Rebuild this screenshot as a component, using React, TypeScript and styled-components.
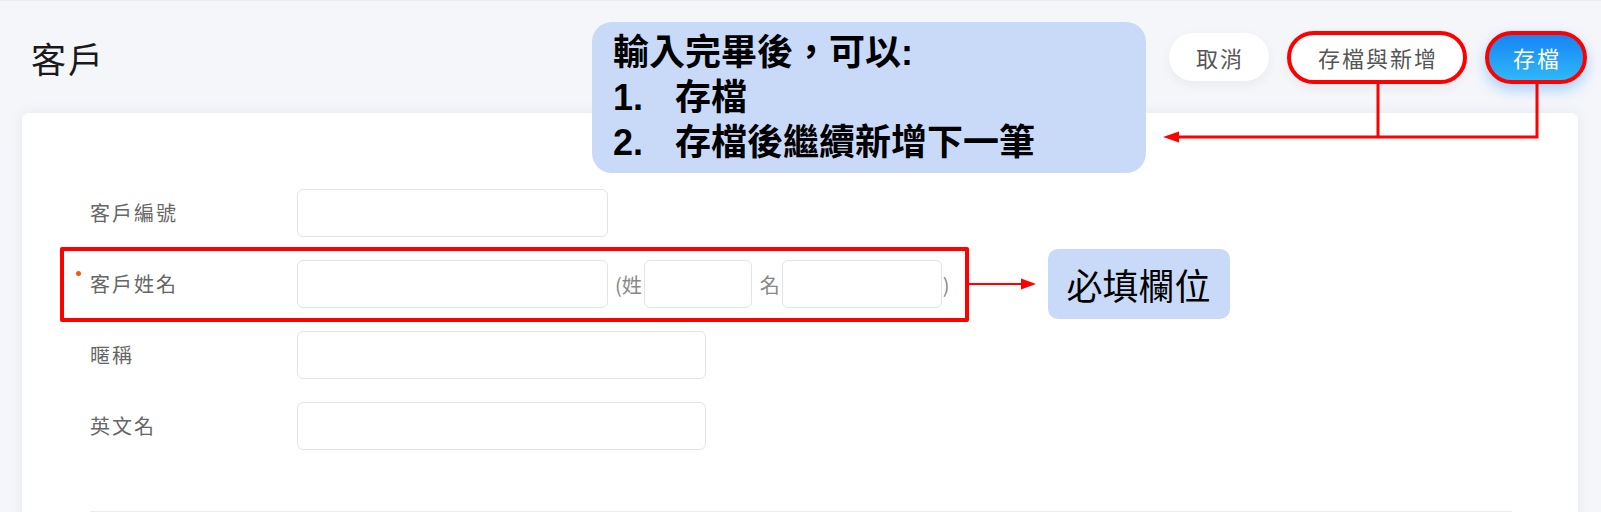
import React from "react"
import styled, { createGlobalStyle, css } from "styled-components"

const CJK = `"Noto Sans CJK TC", "Noto Sans CJK SC", sans-serif`
const RED = "#ff0000"
const NOTE_BG = "#c9daf8"
const PAGE_BG = "#f5f6fa"

const GlobalStyle = createGlobalStyle`
  html, body {
    margin: 0;
    padding: 0;
    overflow: hidden;
  }
  body {
    font-family: ${CJK};
    background: ${PAGE_BG};
  }
  * {
    box-sizing: border-box;
  }
`

const Page = styled.div`
  position: relative;
  height: 512px;
  background: ${PAGE_BG};
  overflow: hidden;
`

const Header = styled.header`
  display: flex;
  align-items: center;
  justify-content: space-between;
  height: 113px;
  padding: 0 14px 0 31px;
  border-top: 1px solid #e9eaee;
`

const Title = styled.h1`
  margin: 0;
  font-size: 35px;
  font-weight: 400;
  letter-spacing: 2px;
  color: #1a1a1a;
`

const Actions = styled.div`
  display: flex;
  align-items: center;
  gap: 18px;
`

const PillButton = styled.button<{ $primary?: boolean; $marked?: boolean }>`
  height: ${(p) => (p.$marked ? 53 : 48)}px;
  padding: 0 ${(p) => (p.$primary ? 22 : 25)}px 0 ${(p) => (p.$primary ? 24 : 27)}px;
  border-radius: 999px;
  border: ${(p) => (p.$marked ? `4px solid ${RED}` : "none")};
  background: ${(p) =>
    p.$primary ? "linear-gradient(180deg, #1784f5 0%, #2fb8f8 100%)" : "#fff"};
  color: ${(p) => (p.$primary ? "#fff" : "#555")};
  font-family: ${CJK};
  font-size: 22px;
  letter-spacing: 2px;
  box-shadow: ${(p) =>
    p.$primary
      ? "0 6px 14px rgba(24, 144, 255, 0.35)"
      : "0 4px 12px rgba(0, 0, 0, 0.05)"};
`

const Card = styled.section`
  margin: 0 23px 0 22px;
  padding: 76px 66px 40px 68px;
  background: #fff;
  border-radius: 6px 6px 0 0;
  box-shadow: 0 0 14px rgba(30, 40, 80, 0.07);
`

const Form = styled.div`
  display: flex;
  flex-direction: column;
  gap: 23px;
`

const Row = styled.div`
  display: flex;
  align-items: center;
  height: 48px;
`

const Label = styled.label<{ $required?: boolean }>`
  position: relative;
  flex: 0 0 207px;
  font-size: 20px;
  line-height: 28px;
  letter-spacing: 2px;
  color: #666;

  ${(p) =>
    p.$required &&
    css`
      &::before {
        content: "";
        position: absolute;
        left: -14px;
        top: 1px;
        width: 5px;
        height: 5px;
        border-radius: 50%;
        background: #f25a0c;
      }
    `}
`

const TextInput = styled.input<{ $w: number }>`
  flex: none;
  width: ${(p) => p.$w}px;
  height: 48px;
  padding: 0 12px;
  border: 1px solid #e3e4e8;
  border-radius: 6px;
  background: #fff;
  font: inherit;
  outline: none;
`

const Hint = styled.span<{ $gap: number }>`
  margin: 0 2px 0 ${(p) => p.$gap}px;
  font-size: 20px;
  color: #888;
`

const Highlight = styled.div`
  display: flex;
  align-items: center;
  flex: none;
  height: 75px;
  margin-left: -30px;
  padding: 0 13px 0 26px;
  border: 4px solid ${RED};
  border-radius: 2px;
`

const Badge = styled.div`
  display: flex;
  align-items: center;
  flex: none;
  height: 70px;
  margin-left: 12px;
  padding: 0 19px;
  background: ${NOTE_BG};
  border-radius: 10px;
  font-size: 36px;
  font-weight: 400;
  color: #000;
`

const Divider = styled.hr`
  margin: 61px 0 0;
  border: 0;
  border-top: 1px solid #ececec;
`

const Callout = styled.div`
  position: absolute;
  left: 592px;
  top: 22px;
  width: 554px;
  height: 151px;
  padding: 8px 0 0 21px;
  background: ${NOTE_BG};
  border-radius: 20px;
  font-family: "Liberation Sans", ${CJK};
  font-weight: 700;
  font-size: 36px;
  line-height: 45px;
  color: #000;
`

const Step = styled.div`
  display: flex;
`

const StepNo = styled.span`
  flex: 0 0 62px;
`

const Connectors = styled.svg`
  position: absolute;
  left: 0;
  top: 0;
  pointer-events: none;
`

const App = () => (
  <>
    <GlobalStyle />
    <Page>
      <Header>
        <Title>客戶</Title>
        <Actions>
          <PillButton>取消</PillButton>
          <PillButton $marked>存檔與新增</PillButton>
          <PillButton $marked $primary>
            存檔
          </PillButton>
        </Actions>
      </Header>

      <Card>
        <Form>
          <Row>
            <Label>客戶編號</Label>
            <TextInput $w={311} />
          </Row>
          <Row>
            <Highlight>
              <Label $required>客戶姓名</Label>
              <TextInput $w={311} />
              <Hint $gap={7}>(姓</Hint>
              <TextInput $w={108} />
              <Hint $gap={8}>名</Hint>
              <TextInput $w={160} />
              <Hint $gap={1}>)</Hint>
            </Highlight>
            <svg width="67" height="14" viewBox="0 0 67 14">
              <line x1="0" y1="7" x2="54" y2="7" stroke={RED} strokeWidth="2" />
              <polygon points="52,1.5 67,7 52,12.5" fill={RED} />
            </svg>
            <Badge>必填欄位</Badge>
          </Row>
          <Row>
            <Label>暱稱</Label>
            <TextInput $w={409} />
          </Row>
          <Row>
            <Label>英文名</Label>
            <TextInput $w={409} />
          </Row>
        </Form>
        <Divider />
      </Card>

      <Callout>
        <div>輸入完畢後，可以:</div>
        <Step>
          <StepNo>1.</StepNo>存檔
        </Step>
        <Step>
          <StepNo>2.</StepNo>存檔後繼續新增下一筆
        </Step>
      </Callout>

      <Connectors width="1601" height="512" viewBox="0 0 1601 512">
        <polyline points="1378,84 1378,137" fill="none" stroke={RED} strokeWidth="3" />
        <polyline
          points="1537,84 1537,137 1176,137"
          fill="none"
          stroke={RED}
          strokeWidth="3"
        />
        <polygon points="1163,137 1179,131.5 1179,142.5" fill={RED} />
      </Connectors>
    </Page>
  </>
)

export default App
